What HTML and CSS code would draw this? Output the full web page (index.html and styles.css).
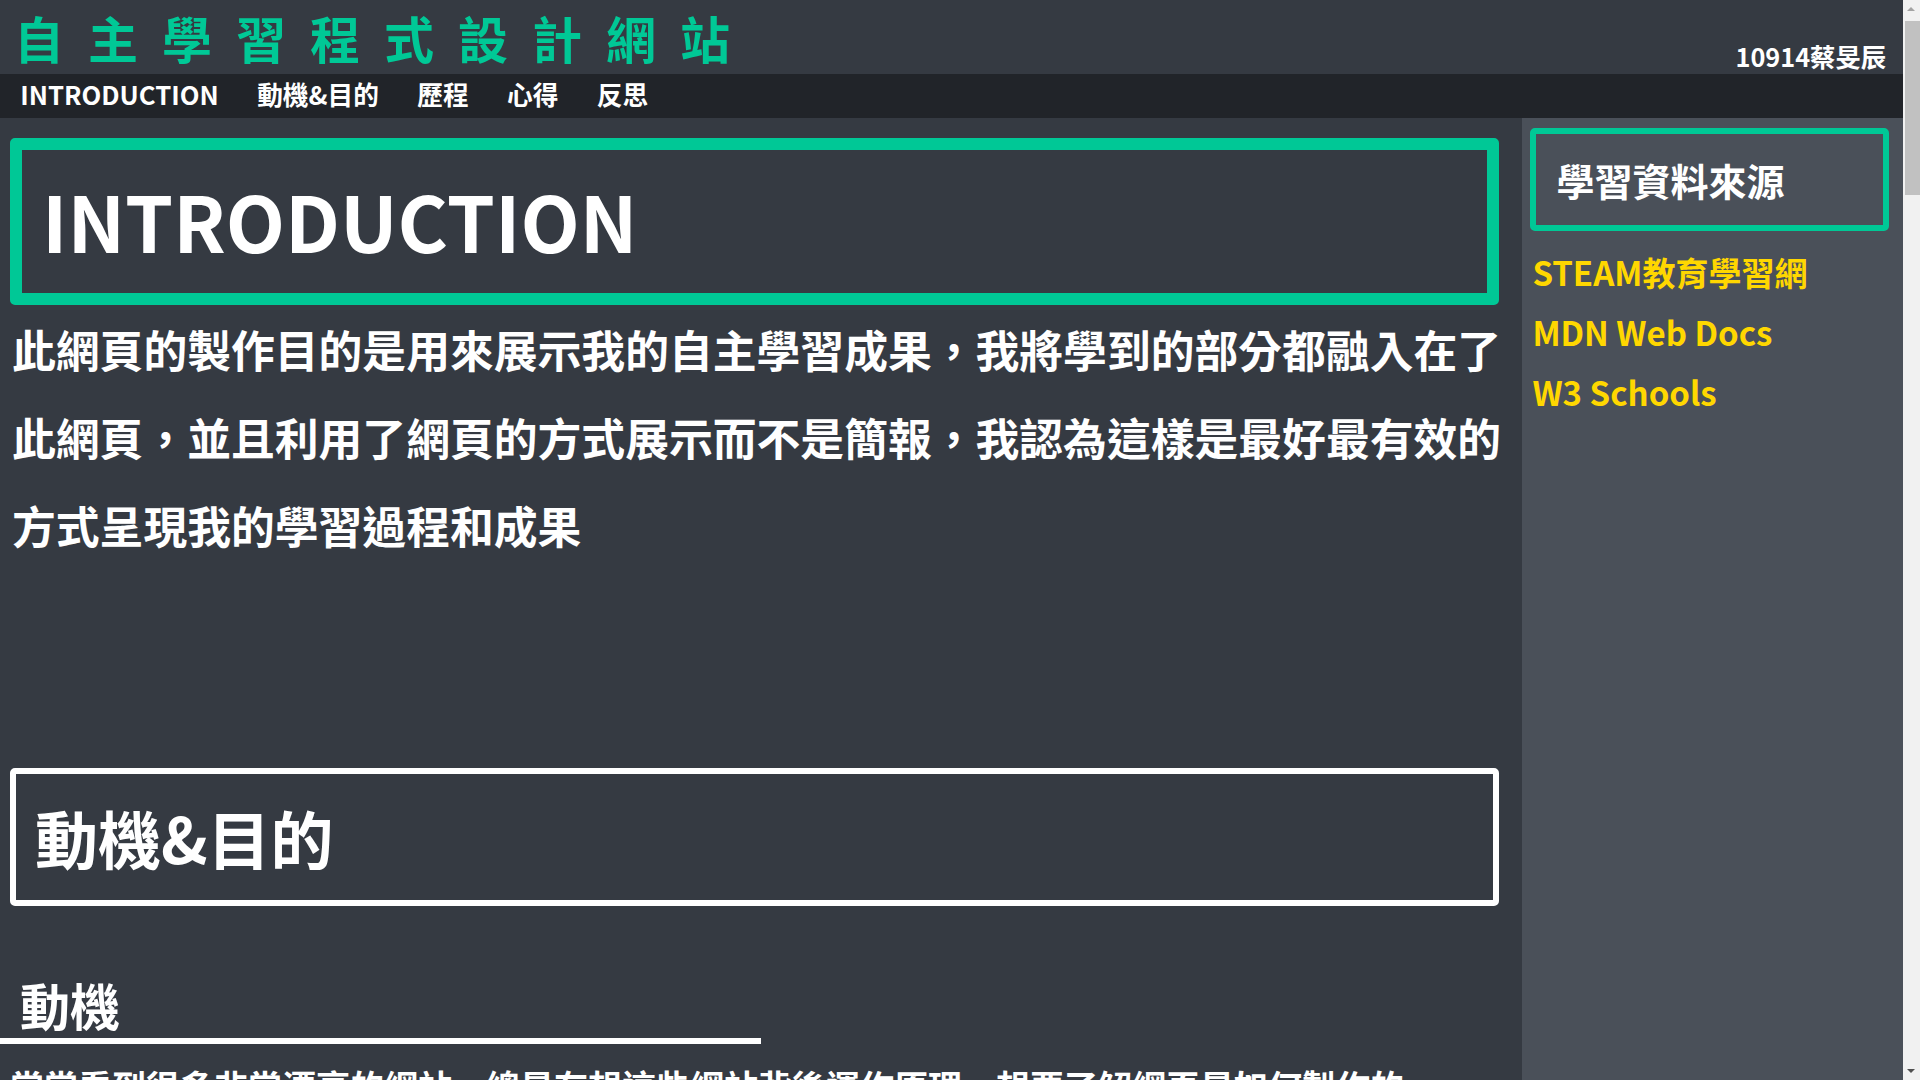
FILE: index.html
```html
<!DOCTYPE html>
<html lang="zh-Hant">
<head>
<meta charset="utf-8">
<title>自主學習程式設計網站</title>
<link rel="stylesheet" href="styles.css">
</head>
<body>
<div class="page">
<header class="site-header">
  <h1 class="site-title">自主學習程式設計網站</h1>
  <div class="author">10914蔡旻辰</div>
</header>
<nav class="topnav">
  <a href="#intro">INTRODUCTION</a>
  <a href="#motive">動機&amp;目的</a>
  <a href="#process">歷程</a>
  <a href="#thoughts">心得</a>
  <a href="#reflect">反思</a>
</nav>
<div class="layout">
  <main class="content">
    <section id="intro">
      <h2 class="box box-green">INTRODUCTION</h2>
      <p class="lead">此網頁的製作目的是用來展示我的自主學習成果，我將學到的部分都融入在了此網頁，並且利用了網頁的方式展示而不是簡報，我認為這樣是最好最有效的方式呈現我的學習過程和成果</p>
    </section>
    <section id="motive" class="section">
      <h2 class="box box-white">動機&amp;目的</h2>
      <h3 class="sub-head">動機</h3>
      <p class="body-text">常常看到很多非常漂亮的網站，總是在想這些網站背後運作原理，想要了解網頁是如何製作的。</p>
      <h3 class="sub-head">目的</h3>
      <p class="body-text">學習HTML與CSS的基本語法，並且親手製作出一個屬於自己的網站。</p>
    </section>
    <section id="process" class="section">
      <h2 class="box box-white">歷程</h2>
      <p class="body-text">先從網路上的教學網站開始學習基本的語法，再一步一步完成網頁的排版與樣式。</p>
    </section>
    <section id="thoughts" class="section">
      <h2 class="box box-white">心得</h2>
      <p class="body-text">透過這次的自主學習，我學到了很多關於網頁設計的知識。</p>
    </section>
    <section id="reflect" class="section">
      <h2 class="box box-white">反思</h2>
      <p class="body-text">還有很多地方可以做得更好，未來會繼續努力學習。</p>
    </section>
  </main>
  <aside class="sidebar">
    <h2 class="side-box">學習資料來源</h2>
    <div class="side-links">
      <a class="side-link" href="#">STEAM教育學習網</a>
      <a class="side-link" href="#">MDN Web Docs</a>
      <a class="side-link" href="#">W3 Schools</a>
    </div>
  </aside>
</div>
</div>
<div class="fake-scrollbar" aria-hidden="true">
  <span class="sb-arrow sb-up"></span>
  <span class="sb-thumb"></span>
  <span class="sb-arrow sb-down"></span>
</div>
</body>
</html>
```
FILE: styles.css
```css
html, body {
  margin: 0;
  padding: 0;
}
body {
  background: #353a42;
  color: #ffffff;
  font-family: "Noto Sans CJK TC", "Noto Sans", sans-serif;
  font-weight: 700;
}
.page {
  margin-right: 17px;
}
.site-header {
  display: flex;
  justify-content: space-between;
  align-items: flex-end;
  height: 74px;
  background: #353a42;
}
.site-title {
  margin: 0;
  padding-left: 14px;
  font-size: 50px;
  line-height: 74px;
  letter-spacing: 24px;
  color: #00c896;
  font-weight: 700;
}
.author {
  font-size: 25.3px;
  padding-right: 17px;
}
.topnav {
  display: flex;
  height: 44px;
  padding-left: 1px;
  background: #212429;
}
.topnav a {
  color: #ffffff;
  text-decoration: none;
  font-size: 25.7px;
  line-height: 40px;
  padding: 0 19.2px;
}
.layout {
  display: flex;
  min-height: 6370px;
}
.content {
  width: 80%;
  padding-top: 20px;
}
.sidebar {
  width: 20%;
  background: #4a5059;
  padding-top: 10px;
}
.box {
  margin: 0 23px 0 10px;
  border-radius: 5px;
  font-weight: 700;
}
.box-green {
  border: 12px solid #00c896;
  font-size: 77px;
  line-height: 113px;
  padding: 13px 22px 17px 20px;
}
.lead {
  margin: 0 8px 0 12px;
  font-size: 43.8px;
  line-height: 88px;
}
.section {
  margin-top: 199px;
}
.box-white {
  border: 6px solid #ffffff;
  font-size: 63px;
  line-height: 93px;
  padding: 16px 19px 17px;
}
.sub-head {
  box-sizing: border-box;
  width: 50%;
  margin: 64px 0 0;
  padding-left: 20px;
  font-size: 50px;
  line-height: 68px;
  border-bottom: 6px solid #ffffff;
}
.body-text {
  margin: 8px 10px 0;
  font-size: 34px;
  line-height: 68px;
}
.side-box {
  margin: 0 14px 0 8px;
  border: 6px solid #00c896;
  border-radius: 5px;
  font-size: 38px;
  line-height: 55px;
  padding: 18px 20px;
  font-weight: 700;
}
.side-links {
  margin-top: 11px;
  padding-left: 10px;
}
.side-link {
  display: block;
  color: #ffd700;
  text-decoration: none;
  font-size: 33px;
  line-height: 60px;
}
.fake-scrollbar {
  position: fixed;
  top: 0;
  right: 0;
  width: 17px;
  height: 100vh;
  background: #f1f1f1;
}
.sb-thumb {
  position: absolute;
  left: 2px;
  right: 0;
  top: 21px;
  height: 174px;
  background: #c1c1c1;
}
.sb-arrow {
  position: absolute;
  left: 4px;
  width: 0;
  height: 0;
  border-left: 4px solid transparent;
  border-right: 4px solid transparent;
}
.sb-up {
  top: 7px;
  border-bottom: 4px solid #a3a3a3;
}
.sb-down {
  bottom: 7px;
  border-top: 4px solid #505050;
}
```
